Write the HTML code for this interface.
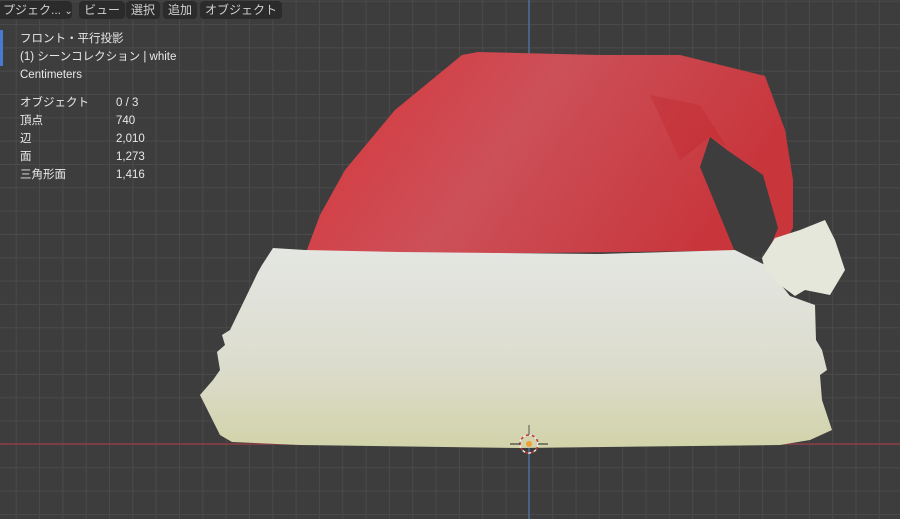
<!DOCTYPE html>
<html><head><meta charset="utf-8"><style>
body{margin:0;width:900px;height:519px;overflow:hidden;background:#3d3d3d;font-family:"Liberation Sans","Noto Sans CJK JP",sans-serif;position:relative}
.grid{position:absolute;inset:0;background-image:linear-gradient(to right,#4a4a4a 1px,transparent 1px),linear-gradient(to bottom,#4a4a4a 1px,transparent 1px);background-size:23.33px 23.33px;background-position:15.7px 0.7px}
.btn{position:absolute;top:1px;height:18px;background:#2b2b2b;border-radius:4px;color:#d0d0d0;font-size:12px;line-height:18px;padding:0 5px;white-space:nowrap;overflow:hidden}
.info{position:absolute;left:20px;color:#e8e8e8;font-size:11.5px;line-height:18px}
.v{position:absolute;left:96px}
</style></head><body>
<div class="grid"></div>
<svg width="900" height="519" style="position:absolute;left:0;top:0">
<defs>
<linearGradient id="r" x1="0" y1="0" x2="1" y2="0.3"><stop offset="0" stop-color="#d9343a"/><stop offset="0.5" stop-color="#cc5058"/><stop offset="1" stop-color="#c8363c"/></linearGradient>
<linearGradient id="f" x1="0" y1="0" x2="0" y2="1"><stop offset="0" stop-color="#e4e6e2"/><stop offset="0.6" stop-color="#dcdccd"/><stop offset="1" stop-color="#d2d3a9"/></linearGradient>
</defs>
<line x1="529" y1="0" x2="529" y2="519" stroke="#4b6e9c" stroke-width="1.5"/>
<line x1="0" y1="444" x2="900" y2="444" stroke="#8c3c44" stroke-width="1.5"/>
<polygon fill="url(#r)" points="305,255 320,215 345,170 395,110 462,55 478,52 600,55 680,55 765,76 785,130 793,180 793,228 780,250 305,256"/>
<polygon fill="#c0262c" opacity="0.35" points="650,95 700,105 727,147 710,137 680,160"/>
<polygon fill="#3d3d3d" points="710,137 727,150 763,175 778,228 768,252 735,252 700,167"/>
<polygon fill="url(#f)" points="273,248 305,250 400,252 600,254 735,250 765,265 790,296 815,305 816,340 822,350 827,370 820,375 822,400 832,430 810,440 780,445 520,448 300,445 232,442 220,435 200,395 213,380 220,370 217,352 225,345 222,335 230,330 258,272 262,265"/>
<polygon fill="#e6e7db" points="762,258 775,238 800,230 825,220 835,240 845,270 830,295 805,290 795,296 780,285 765,270"/>
<circle cx="529" cy="444" r="9" fill="none" stroke="#e8e8e8" stroke-width="1.5" stroke-dasharray="3 3"/>
<circle cx="529" cy="444" r="9" fill="none" stroke="#c0392b" stroke-width="1.5" stroke-dasharray="3 3" stroke-dashoffset="3"/>
<line x1="510" y1="444" x2="520" y2="444" stroke="#222"/><line x1="538" y1="444" x2="548" y2="444" stroke="#222"/>
<line x1="529" y1="425" x2="529" y2="435" stroke="#555"/>
<circle cx="529" cy="444" r="3" fill="#f0a030"/>
<rect x="0" y="30" width="3" height="36" fill="#4a7ad0"/>
</svg>
<div class="btn" style="left:-2px;width:64px">プジェク... <span style="font-size:10px">⌄</span></div>
<div class="btn" style="left:79px">ビュー</div>
<div class="btn" style="left:126px">選択</div>
<div class="btn" style="left:163px">追加</div>
<div class="btn" style="left:200px">オブジェクト</div>
<div class="info" style="top:30px">フロント・平行投影<br>(1) シーンコレクション | white<br>Centimeters</div>
<div class="info" style="top:94px">オブジェクト<br>頂点<br>辺<br>面<br>三角形面
<div class="v" style="top:0">0 / 3<br>740<br>2,010<br>1,273<br>1,416</div></div>
</body></html>
